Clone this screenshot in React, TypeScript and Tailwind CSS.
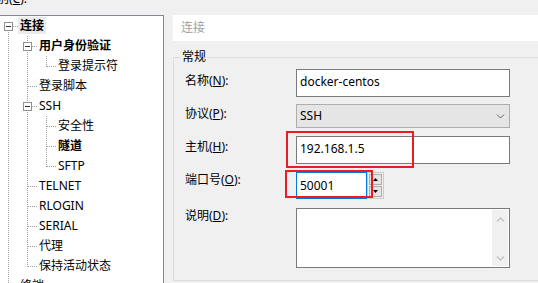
type Kind = "pipe" | "tee" | "elbow" | "boxFirst" | "boxMid";

type Node = { cells: Kind[]; label: string; bold?: boolean; selected?: boolean };

const tree: Node[] = [
  { cells: ["boxFirst"], label: "连接", bold: true, selected: true },
  { cells: ["pipe", "boxMid"], label: "用户身份验证", bold: true },
  { cells: ["pipe", "pipe", "elbow"], label: "登录提示符" },
  { cells: ["pipe", "tee"], label: "登录脚本" },
  { cells: ["pipe", "boxMid"], label: "SSH" },
  { cells: ["pipe", "pipe", "tee"], label: "安全性" },
  { cells: ["pipe", "pipe", "tee"], label: "隧道", bold: true },
  { cells: ["pipe", "pipe", "elbow"], label: "SFTP" },
  { cells: ["pipe", "tee"], label: "TELNET" },
  { cells: ["pipe", "tee"], label: "RLOGIN" },
  { cells: ["pipe", "tee"], label: "SERIAL" },
  { cells: ["pipe", "tee"], label: "代理" },
  { cells: ["pipe", "elbow"], label: "保持活动状态" },
  { cells: ["tee"], label: "终端" },
];

function Cell({ kind }: { kind: Kind }) {
  const dot = { stroke: "#a0a0a0", strokeWidth: 1, strokeDasharray: "1 1" };
  const hasBox = kind === "boxFirst" || kind === "boxMid";
  return (
    <svg width="19" height="20" className="shrink-0">
      {(kind === "pipe" || kind === "tee" || kind === "boxMid") && (
        <line x1="8.5" y1="0" x2="8.5" y2="20" {...dot} />
      )}
      {kind === "elbow" && <line x1="8.5" y1="0" x2="8.5" y2="11" {...dot} />}
      {kind === "boxFirst" && <line x1="8.5" y1="10" x2="8.5" y2="20" {...dot} />}
      {(kind === "tee" || kind === "elbow") && (
        <line x1="9" y1="10.5" x2="19" y2="10.5" {...dot} />
      )}
      {hasBox && (
        <>
          <line x1="13" y1="10.5" x2="19" y2="10.5" {...dot} />
          <rect x="4.5" y="6.5" width="8" height="8" fill="#fff" stroke="#919191" />
          <line x1="6" y1="10.5" x2="11" y2="10.5" stroke="#333" />
        </>
      )}
    </svg>
  );
}

function Chevron({ up, color, w }: { up?: boolean; color: string; w: number }) {
  return (
    <svg width="9" height="5" className="shrink-0">
      <polyline
        points={up ? "1,4.5 4.5,1 8,4.5" : "1,0.5 4.5,4 8,0.5"}
        fill="none"
        stroke={color}
        strokeWidth={w}
      />
    </svg>
  );
}

export default function App() {
  return (
    <div className="relative flex h-[283px] w-[538px] overflow-hidden bg-[#f0f0f0] font-['Noto_Sans','Noto_Sans_CJK_SC',sans-serif] text-[12px] text-black">
      <div className="flex w-[164px] shrink-0 flex-col">
        <div className="h-[15px] shrink-0 overflow-hidden">
          <div className="-ml-[15px] -mt-[9px] h-[16px] whitespace-nowrap leading-[16px]">
            类别(<u>C</u>):
          </div>
        </div>
        <div className="min-h-0 flex-1 overflow-hidden border-t border-r border-[#828790] bg-white">
          {tree.map((node) => (
            <div key={node.label} className="flex h-[20px]">
              {node.cells.map((k, i) => (
                <Cell key={i} kind={k} />
              ))}
              <span
                className={
                  "-ml-px mt-px h-[17px] whitespace-nowrap px-[2px] leading-[17px] " +
                  (node.bold ? "font-bold " : "") +
                  (node.selected ? "bg-[#ebebeb]" : "")
                }
              >
                {node.label}
              </span>
            </div>
          ))}
        </div>
      </div>

      <div className="min-w-0 flex-1 pl-[9px] pt-[15px]">
        <div className="flex h-[26px] w-[400px] items-center bg-white pl-[8px] text-[#a0a0a0]">
          连接
        </div>
        <fieldset className="mt-[8px] h-[232px] w-[380px] border border-[#dcdcdc]">
          <legend className="ml-[7px] px-[1px] leading-[16px]">常规</legend>

          <div className="mt-[4px] flex pl-[11px]">
            <div className="mt-[4px] w-[111px] leading-[16px]">
              名称(<u>N</u>):
            </div>
            <div className="flex h-[28px] w-[214px] items-center border border-[#7a7a7a] bg-white pb-[2px] pl-[3px]">
              docker-centos
            </div>
          </div>

          <div className="mt-[7px] flex pl-[11px]">
            <div className="mt-[2px] w-[111px] leading-[16px]">
              协议(<u>P</u>):
            </div>
            <div className="flex h-[24px] w-[214px] items-center justify-between border border-[#adadad] bg-[#e5e5e5] pl-[3px] pr-[4px]">
              <span>SSH</span>
              <Chevron color="#606060" w={1} />
            </div>
          </div>

          <div className="mt-[8px] flex pl-[11px]">
            <div className="mt-[3px] w-[111px] leading-[16px]">
              主机(<u>H</u>):
            </div>
            <div className="flex h-[28px] w-[214px] items-center border border-[#7a7a7a] bg-white pb-[2px] pl-[3px]">
              192.168.1.5
            </div>
          </div>

          <div className="mt-[8px] flex pl-[11px]">
            <div className="mt-0 w-[111px] leading-[16px]">
              端口号(<u>O</u>):
            </div>
            <div className="flex h-[27px] w-[71px] items-center border border-[#0078d7] bg-white pl-[3px]">
              50001
            </div>
            <div className="flex h-[27px] w-[17px] flex-col gap-[1px] border border-[#cccccc] bg-[#f0f0f0] p-[1px]">
              <div className="flex flex-1 items-center justify-center border border-[#adadad] bg-[#e5e5e5]">
                <svg width="5" height="3">
                  <path d="M0 3 L2.5 0 L5 3 Z" fill="#000" />
                </svg>
              </div>
              <div className="flex flex-1 items-center justify-center border border-[#adadad] bg-[#e5e5e5]">
                <svg width="5" height="3">
                  <path d="M0 0 L5 0 L2.5 3 Z" fill="#000" />
                </svg>
              </div>
            </div>
          </div>

          <div className="mt-[9px] flex pl-[11px]">
            <div className="mt-0 w-[111px] leading-[16px]">
              说明(<u>D</u>):
            </div>
            <div className="flex h-[60px] w-[214px] justify-end border border-[#7a7a7a] bg-white p-[1px]">
              <div className="flex w-[16px] flex-col items-center justify-between bg-[#f0f0f0] pb-[5px] pt-[7px]">
                <Chevron up color="#c4c4c4" w={1.5} />
                <Chevron color="#c4c4c4" w={1.5} />
              </div>
            </div>
          </div>
        </fieldset>
      </div>

      <div className="absolute left-[286px] top-[131px] h-[37px] w-[128px] border-2 border-[#ed1c24]" />
      <div className="absolute left-[285px] top-[170px] h-[28px] w-[88px] border-2 border-[#ed1c24]" />
    </div>
  );
}
